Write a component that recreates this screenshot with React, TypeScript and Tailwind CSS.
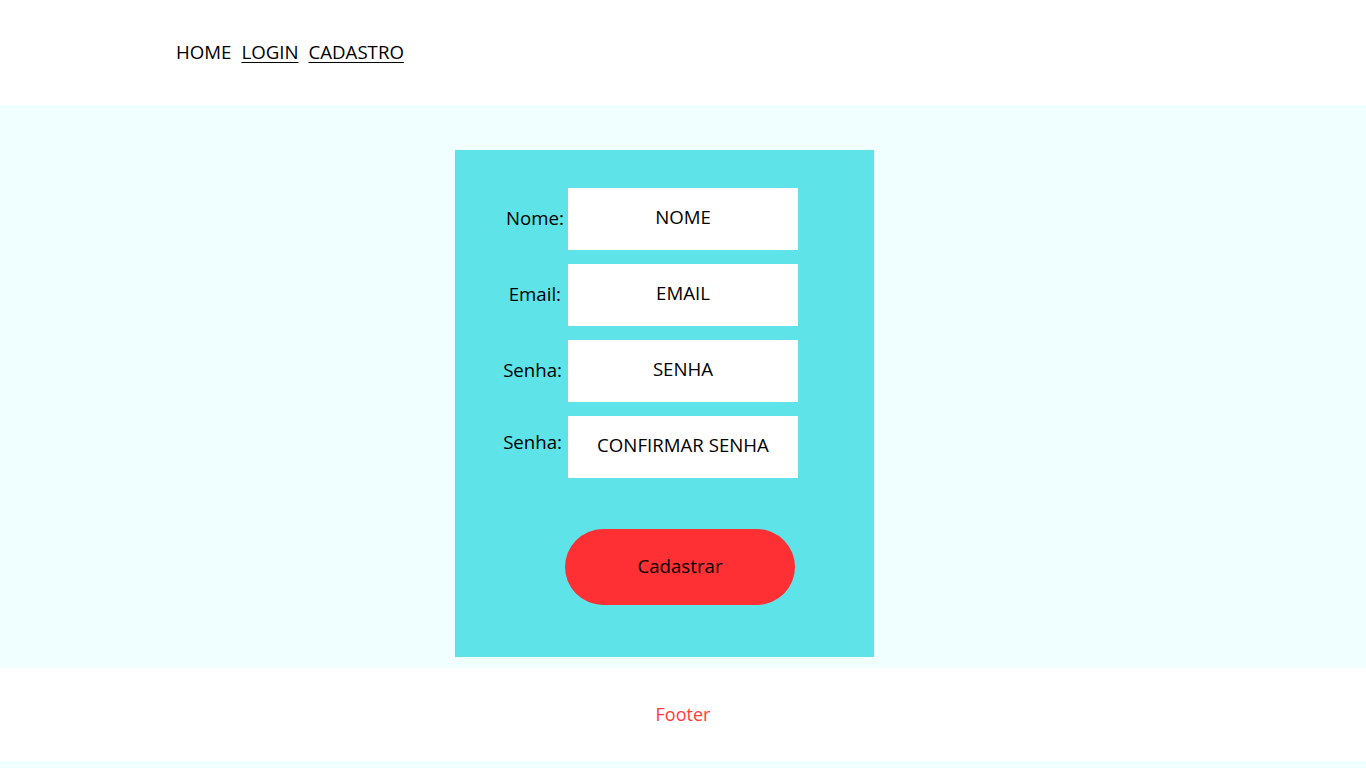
export default function App() {
  const campos = [
    { label: "Nome:", placeholder: "NOME", pr: "pr-[4px]", extra: "mb-[2px]" },
    { label: "Email:", placeholder: "EMAIL", pr: "pr-[7px]", extra: "mb-[2px]" },
    { label: "Senha:", placeholder: "SENHA", pr: "pr-[6px]", extra: "mb-[2px]" },
    { label: "Senha:", placeholder: "CONFIRMAR SENHA", pr: "pr-[6px]", extra: "mb-[10px]" },
  ];

  return (
    <div
      className="min-h-screen bg-[#f0ffff] text-black"
      style={{ fontFamily: '"Open Sans", "Noto Sans", sans-serif' }}
    >
      {/* Header */}
      <header className="h-[105px] bg-white flex items-center pl-[176px]">
        <nav className="flex gap-[10px] text-[18.67px] leading-none">
          <a className="cursor-pointer">HOME</a>
          <a className="underline underline-offset-[3px] cursor-pointer">LOGIN</a>
          <a className="underline underline-offset-[3px] cursor-pointer">CADASTRO</a>
        </nav>
      </header>

      {/* Conteudo */}
      <main className="h-[563px] bg-[#f0ffff] pt-[45px] pl-[455px]">
        <div className="w-[419px] h-[507px] bg-[#5ee3e8] pt-[38px]">
          <div className="flex flex-col gap-[14px]">
            {campos.map((c, i) => (
              <div key={i} className="flex items-center">
                <label className={`w-[113px] text-right text-[18.67px] ${c.pr} ${c.extra}`}>
                  {c.label}
                </label>
                <input
                  className="w-[230px] h-[62px] bg-white text-center text-[18.67px] text-black placeholder:text-black outline-none pb-[6px]"
                  placeholder={c.placeholder}
                />
              </div>
            ))}
          </div>
          <button className="ml-[110px] mt-[51px] w-[230px] h-[76px] rounded-full bg-[#ff3033] text-[18.67px] text-black pb-[2px]">
            Cadastrar
          </button>
        </div>
      </main>

      {/* Footer */}
      <footer className="h-[93px] bg-white flex items-center justify-center">
        <span className="text-[18px] text-[#ff3b3b]">Footer</span>
      </footer>
    </div>
  );
}
